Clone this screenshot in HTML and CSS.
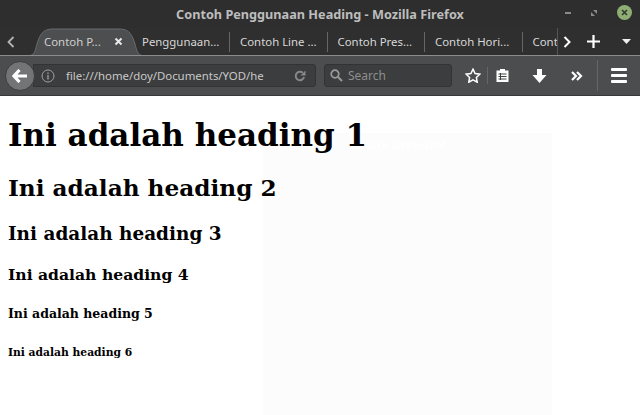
FILE: index.html
```html
<!DOCTYPE html>
<html lang="en">
<head>
  <meta charset="UTF-8" />
  <title>Contoh Penggunaan Heading - Mozilla Firefox</title>
  <link rel="stylesheet" href="styles.css">
</head>
<body>

  <header class="browser">
    <div class="titlebar">
      <span class="title">Contoh Penggunaan Heading - Mozilla Firefox</span>
      <div class="window-btns">
        <span class="win-min"></span>
        <svg class="win-max" width="8" height="8" viewBox="0 0 8 8"><path d="M3 1h4v4zM1 3l4 4H1z" fill="#8a8a8a"/></svg>
        <span class="win-close">
          <svg width="7" height="7" viewBox="0 0 7 7"><path d="M1 1l5 5M6 1L1 6" stroke="#33382f" stroke-width="1.6"/></svg>
        </span>
      </div>
    </div>

    <div class="tabbar">
      <svg class="tab-scroll" width="10" height="14" viewBox="0 0 10 14"><path d="M7.500 2L2.500 7l5 5" fill="none" stroke="#b5b5b5" stroke-width="1.800"/></svg>
      <div class="tabs">
        <div class="tab active">
          <svg class="tab-shape" width="118" height="28" viewBox="0 0 118 28"><path d="M0 28c9 0 8-7 11-15C14 4 18 1 26 1h66c8 0 12 3 15 12 3 8 2 15 11 15z" fill="#4d4e4f" stroke="#6a6b6c" stroke-width="1"/></svg>
          <span class="tab-label">Contoh P...</span>
          <svg class="tab-close" width="9" height="9" viewBox="0 0 9 9"><path d="M1.500 1.500l6 6M7.500 1.500l-6 6" stroke="#e8e8e8" stroke-width="2"/></svg>
        </div>
        <div class="tab first">Penggunaan...</div>
        <div class="tab">Contoh Line ...</div>
        <div class="tab">Contoh Pres...</div>
        <div class="tab">Contoh Hori...</div>
        <div class="tab last">Cont</div>
      </div>
      <div class="tab-actions">
        <svg width="10" height="14" viewBox="0 0 10 14"><path d="M2.500 2l5 5-5 5" fill="none" stroke="#fff" stroke-width="2"/></svg>
        <svg class="tab-plus" width="13" height="13" viewBox="0 0 13 13"><path d="M6.500 0v13M0 6.500h13" stroke="#fff" stroke-width="2.200"/></svg>
        <svg class="tab-menu" width="9" height="5" viewBox="0 0 9 5"><path d="M0 0h9L4.500 5z" fill="#f0f0f0"/></svg>
      </div>
    </div>

    <div class="navbar">
      <div class="back-btn">
        <svg width="16" height="14" viewBox="0 0 16 14"><path d="M7.500 1L2 7l5.500 6M2.500 7H15" fill="none" stroke="#fff" stroke-width="3.200"/></svg>
      </div>
      <div class="urlbar">
        <svg class="info" width="14" height="14" viewBox="0 0 14 14"><circle cx="7" cy="7" r="6" fill="none" stroke="#a0a0a0" stroke-width="1"/><path d="M7 6v4.500M7 3.500v1.400" stroke="#a0a0a0" stroke-width="1.300"/></svg>
        <span class="url">file:///home/doy/Documents/YOD/he</span>
        <svg class="reload" width="12" height="12" viewBox="0 0 12 12"><path d="M10 7a4.200 4.200 0 1 1-1.300-4.200" fill="none" stroke="#85898c" stroke-width="2"/><path d="M11.500 0.500v5h-5z" fill="#85898c"/></svg>
      </div>
      <div class="searchbar">
        <svg width="13" height="13" viewBox="0 0 13 13"><circle cx="5" cy="5" r="3.800" fill="none" stroke="#9a9a9a" stroke-width="1.700"/><path d="M8 8l4 4" stroke="#9a9a9a" stroke-width="2"/></svg>
        <span>Search</span>
      </div>
      <div class="nav-icons">
        <svg class="star" width="16" height="15" viewBox="0 0 16 15"><path d="M8 1.200l2.100 4.300 4.700.7-3.400 3.300.8 4.700L8 11.900l-4.200 2.300.8-4.700L1.200 6.200l4.700-.7z" fill="none" stroke="#fff" stroke-width="1.500"/></svg>
        <span class="sep"></span>
        <svg class="clip" width="15" height="15" viewBox="0 0 15 15"><path d="M5 2.500V1h5v1.500h3.500V14h-12V2.500z" fill="#fff"/><path d="M3.500 6h8M3.500 8.500h8M3.500 11h8M5.500 5v7" stroke="#3f4041" stroke-width="1"/></svg>
        <svg class="down" width="15" height="14" viewBox="0 0 15 14"><path d="M5 0h5v6h4.500L7.500 14 .5 6H5z" fill="#fff"/></svg>
        <svg class="more" width="12" height="10" viewBox="0 0 12 10"><path d="M1 1l4 4-4 4M6 1l4 4-4 4" fill="none" stroke="#fff" stroke-width="2.200"/></svg>
        <span class="sep tall"></span>
        <div class="hamburger"><i></i><i></i><i></i></div>
      </div>
    </div>
  </header>

  <main class="content">
    <h1>Ini adalah heading 1</h1>
    <h2>Ini adalah heading 2</h2>
    <h3>Ini adalah heading 3</h3>
    <h4>Ini adalah heading 4</h4>
    <h5>Ini adalah heading 5</h5>
    <h6>Ini adalah heading 6</h6>
  </main>

  <div class="ghost-window">
    <span class="ghost-title">Take Screenshot</span>
  </div>

</body>
</html>
```

FILE: styles.css
```css
* {
  box-sizing: border-box;
  margin: 0;
  padding: 0;
}

html,
body {
  height: 100%;
  overflow: hidden;
}

body {
  position: relative;
  background-color: white;
  font-family: 'Noto Sans', sans-serif;
  display: flex;
  flex-direction: column;
}

.browser {
  flex: none;
  background-color: #2f2f2f;
}

.titlebar {
  height: 28px;
  position: relative;
  display: flex;
  align-items: center;
  justify-content: center;
  background-color: #2e2e2e;
}

.title {
  font-size: 12.700px;
  font-weight: 700;
  color: #bdbdbd;
}

.window-btns {
  position: absolute;
  right: 8px;
  top: 5px;
  display: flex;
  align-items: center;
  gap: 19px;
}

.win-min {
  width: 6px;
  height: 2px;
  background-color: #8a8a8a;
}

.win-close {
  width: 15px;
  height: 15px;
  border-radius: 50%;
  background-color: #8fae74;
  display: flex;
  align-items: center;
  justify-content: center;
}

.tabbar {
  height: 28px;
  display: flex;
  align-items: center;
  background-color: #2f2f2f;
  border-bottom: 1px solid #8c8c8c;
}

.tab-scroll {
  margin-left: 6px;
  flex: none;
}

.tabs {
  display: flex;
  flex: 1;
  min-width: 0;
  height: 100%;
  margin-left: 11px;
  overflow: hidden;
  align-items: center;
  font-size: 11.400px;
  color: #d8d8d8;
}

.tab {
  flex: none;
  width: 97.500px;
  height: 20px;
  line-height: 20px;
  padding-left: 10px;
  border-right: 1px solid #666;
  white-space: nowrap;
  overflow: hidden;
}

.tab.first {
  width: 92px;
  padding-left: 4px;
}

.tab.last {
  border-right: none;
  width: 40px;
}

.tab.active {
  position: relative;
  width: 111px;
  height: 100%;
  display: flex;
  align-items: center;
  padding: 0;
  border: none;
  overflow: visible;
  color: #cfcfcf;
}

.tab-shape {
  position: absolute;
  left: 0;
  top: 0;
}

.tab-label {
  position: relative;
  margin-left: 17px;
  width: 70px;
}

.tab-close {
  position: relative;
  flex: none;
}

.tab-actions {
  flex: none;
  width: 83px;
  height: 100%;
  display: flex;
  align-items: center;
  padding-left: 4px;
  border-left: 1px solid #555;
}

.tab-plus {
  margin-left: 15px;
}

.tab-menu {
  margin-left: 22px;
}

.navbar {
  height: 40px;
  display: flex;
  align-items: center;
  padding-left: 5px;
  background-color: #4c4d4e;
  border-bottom: 1px solid #38393a;
}

.back-btn {
  flex: none;
  width: 30px;
  height: 30px;
  border-radius: 50%;
  background-color: #737475;
  border: 1px solid #3c3d3e;
  display: flex;
  align-items: center;
  justify-content: center;
  z-index: 1;
}

.urlbar {
  flex: none;
  width: 283px;
  height: 23px;
  margin-left: -2px;
  display: flex;
  align-items: center;
  background-color: #3c3d3e;
  border: 1px solid #333;
  border-radius: 0 3px 3px 0;
}

.info {
  margin-left: 7px;
  flex: none;
}

.url {
  width: 194px;
  flex: none;
  margin-left: 11px;
  font-size: 11.400px;
  color: #c8c8c8;
  white-space: nowrap;
}

.reload {
  margin-left: 34px;
  flex: none;
}

.searchbar {
  flex: none;
  width: 128px;
  height: 23px;
  margin-left: 8px;
  display: flex;
  align-items: center;
  gap: 5px;
  padding-left: 5px;
  font-size: 12px;
  color: #8e8e8e;
  background-color: #3c3d3e;
  border: 1px solid #333;
  border-radius: 3px;
}

.nav-icons {
  flex: 1;
  display: flex;
  align-items: center;
  height: 100%;
  padding-left: 13px;
}

.sep {
  width: 1px;
  height: 17px;
  background-color: #666;
  margin: 0 7px 0 6px;
}

.sep.tall {
  height: 31px;
  margin: 0 13px 0 14px;
}

.down {
  margin-left: 22px;
}

.more {
  margin-left: 24px;
}

.hamburger {
  display: flex;
  flex-direction: column;
  gap: 3px;
}

.hamburger i {
  display: block;
  width: 16px;
  height: 3px;
  background-color: #fff;
  border-radius: 1px;
}

.content {
  flex: 1;
  padding: 0 8px;
  font-family: 'DejaVu Serif', serif;
  color: #000;
  overflow: hidden;
}

h1 {
  font-size: 31px;
  margin: 21px 0;
}

h2 {
  font-size: 23.200px;
  margin: 20px 0 22px;
}

h3 {
  font-size: 18.450px;
  margin: 18.500px 0;
}

h4 {
  font-size: 15.600px;
  margin: 21px 0;
}

h5 {
  font-size: 12.500px;
  margin: 22px 0;
}

h6 {
  font-size: 10.720px;
  margin: 25px 0;
}

/* faint window left over behind the page */
.ghost-window {
  position: absolute;
  left: 263px;
  top: 133px;
  width: 289px;
  height: 282px;
  background-color: rgba(0, 0, 0, 0.012);
  z-index: 2;
}

.ghost-title {
  position: absolute;
  left: 102px;
  top: 5px;
  font-size: 10px;
  font-weight: 700;
  color: #ffffff;
}
```
